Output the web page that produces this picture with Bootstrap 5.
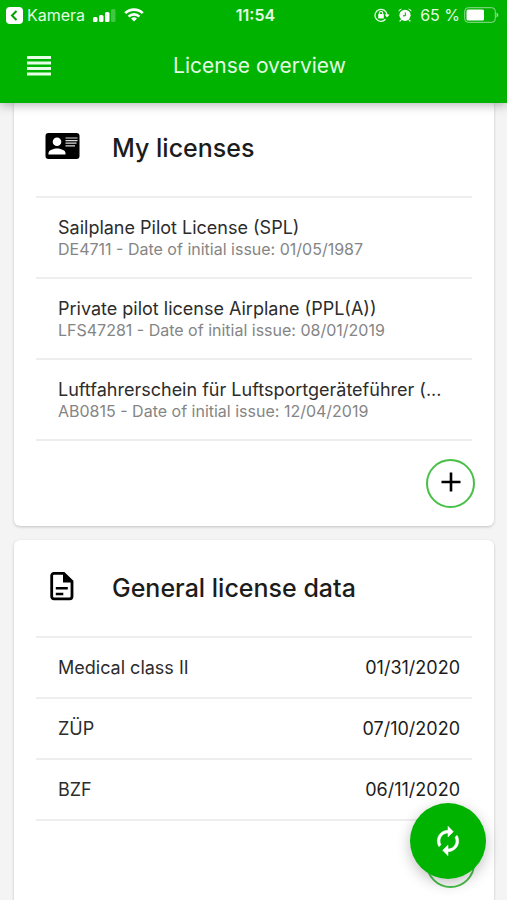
<!DOCTYPE html>
<html lang="en">
<head>
<meta charset="utf-8">
<meta name="viewport" content="width=device-width, initial-scale=1">
<title>License overview</title>
<link href="https://cdn.jsdelivr.net/npm/bootstrap@5.3.0/dist/css/bootstrap.min.css" rel="stylesheet">
<style>
  :root { --app-green: #00b300; --rule: #eeeeee; }
  html { scrollbar-width: none; }
  html::-webkit-scrollbar { display: none; }
  body { font-family: Inter, "Noto Sans", sans-serif; background: #f4f4f4; color: #2c2c2c; }
  svg { display: block; flex: none; }
  .app-header { background: var(--app-green); box-shadow: 0 2px 10px rgba(0, 0, 0, .3); }
  .status-bar { grid-template-columns: 1fr auto 1fr; height: 30px; padding: 0 8px 0 6px; font-size: 16px; line-height: 30px; color: #e2fbe2; }
  .status-time { font-weight: 600; padding-left: 6px; }
  .title-bar { display: grid; grid-template-columns: 92px 1fr 80px; height: 73px; padding-bottom: 2px; }
  .title-bar h1 { font-size: 21px; line-height: 28px; font-weight: 400; color: #e2fbe2; }
  .menu-btn { padding: 0 0 0 27px; border: 0; }
  .panels { padding: 0 13px 14px 14px; margin-top: -3px; gap: 14px; }
  .panel { border: 0; border-radius: 6px; box-shadow: 0 1px 3px rgba(0, 0, 0, .2); padding: 0 22px; }
  .panel-head { height: 98px; padding-left: 8px; gap: 32px; border-bottom: 2px solid var(--rule); }
  .panel-head h2 { font-size: 25px; line-height: 32px; font-weight: 500; color: #1c1c1c; }
  .panel .list-group-flush > .list-group-item { color: inherit; padding: 0 12px 0 22px; border: 0; border-bottom: 2px solid var(--rule); background: none; }
  .license { height: 81px; }
  .license-name { font-size: 18px; line-height: 22px; }
  .license-meta { font-size: 16px; line-height: 20px; color: #858585; }
  .datum { height: 61px; font-size: 18px; line-height: 24px; }
  .datum time { color: #1c1c1c; }
  .panel-foot { height: 85px; padding-top: 18px; margin-right: -3px; }
  .add-btn { width: 49px; height: 49px; border: 2px solid #48c048; padding: 0 0 4px; background: #fff; }
  .sync-btn { width: 76px; height: 76px; right: 21px; bottom: 21px; background: var(--app-green); border: 0; padding: 0; box-shadow: 0 4px 14px rgba(0, 0, 0, .25); z-index: 1030; }
  .sync-btn:hover { background: #009f00; }
</style>
</head>
<body>
<header class="app-header sticky-top">
  <div class="status-bar d-grid align-items-center">
    <div class="d-flex align-items-center">
      <a href="#" class="d-flex align-items-center text-reset text-decoration-none">
        <svg width="17" height="17" viewBox="0 0 17 17" class="me-1"><rect width="17" height="17" rx="4" fill="#fff"/><path d="M10.500 4 6 8.500l4.500 4.500" fill="none" stroke="#00a000" stroke-width="2"/></svg>
        Kamera
      </a>
      <svg width="23" height="13" viewBox="0 0 23 13" class="ms-2" fill="#fff"><rect y="8" width="4.500" height="5" rx="1.500"/><rect x="6" y="6" width="4.500" height="7" rx="1.500"/><rect x="12" y="3" width="4.500" height="10" rx="1.500"/><rect x="18" y="0" width="4.500" height="13" rx="1.500" opacity=".25"/></svg>
      <svg width="20" height="14" viewBox="0 0 20 14" class="ms-2" fill="none" stroke="#fff" stroke-width="2.600"><path d="M1.200 5.200a12.500 12.500 0 0 1 17.600 0M4.600 8.600a7.700 7.700 0 0 1 10.800 0"/><path d="M10 13.500 7 10.600a4.300 4.300 0 0 1 6 0z" fill="#fff" stroke="none"/></svg>
    </div>
    <div class="status-time">11:54</div>
    <div class="d-flex align-items-center justify-content-end">
      <svg width="16" height="14" viewBox="0 0 16 14" class="me-2" fill="none" stroke="#e2fbe2" stroke-width="1.300"><path d="M11.500 11.300A6 6 0 1 1 13 7"/><path d="m10.600 6.500h5L13 9.500z" fill="#fff" stroke="none"/><rect x="4.200" y="6" width="5.600" height="4.500" rx=".6" fill="#fff" stroke="none"/><path d="M5.400 6V5a1.600 1.600 0 0 1 3.200 0v1"/></svg>
      <svg width="14" height="14" viewBox="0 0 14 14" class="me-2" fill="#fff"><circle cx="7" cy="7.300" r="5.600"/><path d="M.5 3.800A3 3 0 0 1 4 .8zM13.500 3.800A3 3 0 0 0 10 .8zM2.500 11.500l1 1-1.500 1.300-.8-.8zM11.500 11.500l-1 1 1.500 1.300.8-.8z"/><path d="M7.300 4.500v3.300H5" fill="none" stroke="#00a000" stroke-width="1"/></svg>
      <span class="me-1">65 %</span>
      <svg width="35" height="16" viewBox="0 0 35 16"><rect x=".7" y=".7" width="30.600" height="14.600" rx="3.500" fill="none" stroke="#8fdc8f" stroke-width="1"/><rect x="2.500" y="2.500" width="17.500" height="11" rx="1.500" fill="#fff"/><path d="M32.500 5.500a2.600 2.600 0 0 1 0 5z" fill="#8fdc8f"/></svg>
    </div>
  </div>
  <div class="title-bar align-items-center">
    <button type="button" class="btn menu-btn" aria-label="Menu">
      <svg width="24" height="20" viewBox="0 0 24 20" fill="#e6ffe6"><path d="M0 0h24v3H0zM0 5.500h24v3H0zM0 11h24v3H0zM0 16.500h24v3H0z"/></svg>
    </button>
    <h1 class="m-0 text-center text-nowrap">License overview</h1>
  </div>
</header>

<main class="panels d-flex flex-column">
  <section class="card panel">
    <div class="panel-head d-flex align-items-center">
      <svg width="36" height="36" viewBox="0 0 36 36"><rect x="1.500" y="3" width="34" height="26" rx="3"/><circle cx="13" cy="11.800" r="4.300" fill="#fff"/><path d="M4.500 24.500v-1.300c0-3.200 5.400-4.700 8.500-4.700s8.500 1.500 8.500 4.700v1.300z" fill="#fff"/><path d="M21.500 8h12M21.500 10.600h12M21.500 13.200h11M21.500 15.800h9.500" stroke="#ddd" stroke-width="1.200"/></svg>
      <h2 class="m-0">My licenses</h2>
    </div>
    <ul class="list-group list-group-flush">
      <li class="list-group-item license d-flex flex-column justify-content-center">
        <div class="license-name text-truncate">Sailplane Pilot License (SPL)</div>
        <div class="license-meta text-truncate">DE4711 - Date of initial issue: 01/05/1987</div>
      </li>
      <li class="list-group-item license d-flex flex-column justify-content-center">
        <div class="license-name text-truncate">Private pilot license Airplane (PPL(A))</div>
        <div class="license-meta text-truncate">LFS47281 - Date of initial issue: 08/01/2019</div>
      </li>
      <li class="list-group-item license d-flex flex-column justify-content-center">
        <div class="license-name text-truncate">Luftfahrerschein für Luftsportgeräteführer (...</div>
        <div class="license-meta text-truncate">AB0815 - Date of initial issue: 12/04/2019</div>
      </li>
    </ul>
    <div class="panel-foot d-flex justify-content-end">
      <button type="button" class="btn add-btn rounded-circle d-flex align-items-center justify-content-center" aria-label="Add license">
        <svg width="20" height="20" viewBox="0 0 20 20" stroke="#000" stroke-width="2.600"><path d="M10 .5v19M.5 10h19"/></svg>
      </button>
    </div>
  </section>

  <section class="card panel">
    <div class="panel-head d-flex align-items-center">
      <svg width="36" height="36" viewBox="0 0 36 36"><path d="M9.200 3.400h10.600l8.200 8v15.200a2.200 2.200 0 0 1-2.200 2.200H9.900a2.200 2.200 0 0 1-2.200-2.200V5.600a2.200 2.200 0 0 1 2.200-2.200z" fill="none" stroke="#000" stroke-width="2.800"/><path d="M19 3v9.500h9.500z"/><path d="M11.800 18.300h12M11.800 24h7.500" stroke="#000" stroke-width="2.600"/></svg>
      <h2 class="m-0">General license data</h2>
    </div>
    <ul class="list-group list-group-flush">
      <li class="list-group-item datum d-flex align-items-center justify-content-between"><span>Medical class II</span><time>01/31/2020</time></li>
      <li class="list-group-item datum d-flex align-items-center justify-content-between"><span>ZÜP</span><time>07/10/2020</time></li>
      <li class="list-group-item datum d-flex align-items-center justify-content-between"><span>BZF</span><time>06/11/2020</time></li>
    </ul>
    <div class="panel-foot d-flex justify-content-end">
      <button type="button" class="btn add-btn rounded-circle d-flex align-items-center justify-content-center" aria-label="Add license data">
        <svg width="20" height="20" viewBox="0 0 20 20" stroke="#000" stroke-width="2.600"><path d="M10 .5v19M.5 10h19"/></svg>
      </button>
    </div>
  </section>
</main>

<button type="button" class="btn sync-btn rounded-circle position-fixed d-flex align-items-center justify-content-center" aria-label="Synchronize">
  <svg width="32" height="32" viewBox="0 0 24 24" fill="#fff" stroke="#fff" stroke-width=".4"><path d="M12 6v3l4-4-4-4v3c-4.420 0-8 3.580-8 8 0 1.570.46 3.030 1.240 4.260L6.700 14.800A5.870 5.870 0 0 1 6 12c0-3.310 2.690-6 6-6zm6.760 1.740L17.300 9.200c.44.84.7 1.790.7 2.800 0 3.310-2.690 6-6 6v-3l-4 4 4 4v-3c4.420 0 8-3.580 8-8 0-1.570-.46-3.030-1.240-4.260z"/></svg>
</button>
<script src="https://cdn.jsdelivr.net/npm/bootstrap@5.3.0/dist/js/bootstrap.bundle.min.js"></script>
</body>
</html>
